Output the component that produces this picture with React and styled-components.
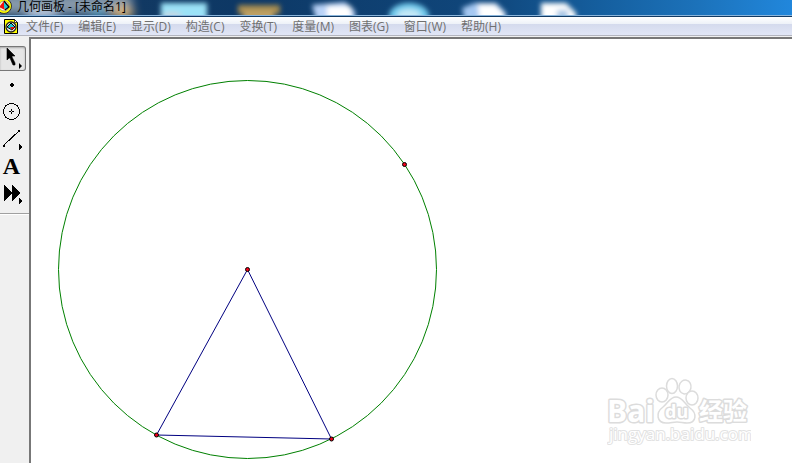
import React from 'react'
import styled, { createGlobalStyle } from 'styled-components'

const menus = [
  '文件(F)',
  '编辑(E)',
  '显示(D)',
  '构造(C)',
  '变换(T)',
  '度量(M)',
  '图表(G)',
  '窗口(W)',
  '帮助(H)',
]

const AppLogo = () => (
  <svg width='16' height='16' viewBox='0 0 16 16' aria-hidden='true'>
    <circle cx='4' cy='8' r='7.5' fill='#ffff00' stroke='#333' />
    <circle cx='4' cy='8' r='5' fill='#fffbe0' stroke='#b0a860' />
    <path d='M-1 9L4 3V9Z' fill='#f01010' />
    <path d='M4 3L9 9L5 12L4 9Z' fill='#18c8d8' />
    <path d='M4 3L9 9L5 12' fill='none' stroke='#000' strokeWidth='1.2' />
    <path d='M-1 9H4L5 12Z' fill='#f01010' />
  </svg>
)

const PageLogo = () => (
  <svg width='16' height='16' viewBox='0 0 16 16' aria-hidden='true'>
    <path d='M1.5 1.5H11.5L14.5 4.5V15.5H1.5Z' fill='#ffff00' stroke='#000' />
    <path d='M11.5 1.5V4.5H14.5Z' fill='#fff' stroke='#000' strokeWidth='0.7' />
    <circle cx='8' cy='9' r='5' fill='#e8e8e8' stroke='#222' strokeWidth='1.3' />
    <path d='M4 9L8 5L12 9L9 12Z' fill='#18c8d8' stroke='#000' />
    <path d='M7 9H12L9 12Z' fill='#e81010' />
  </svg>
)

const Desktop = () => (
  <Backdrop aria-hidden='true'>
    <defs>
      <filter id='soft' x='-30%' y='-80%' width='160%' height='260%'>
        <feGaussianBlur stdDeviation='2.5' />
      </filter>
      <filter id='glow' x='-30%' y='-80%' width='160%' height='260%'>
        <feGaussianBlur stdDeviation='5' />
      </filter>
    </defs>
    <g filter='url(#glow)'>
      <rect x='-10' y='-6' width='142' height='20' fill='#a3b0bd' opacity='0.8' />
      <ellipse cx='122' cy='12' rx='12' ry='6' fill='#e2b877' />
      <ellipse cx='98' cy='13' rx='9' ry='4' fill='#54a9c9' />
      <ellipse cx='42' cy='14' rx='18' ry='4' fill='#dbe7fa' />
    </g>
    <g filter='url(#soft)'>
      <rect x='161' y='3' width='46' height='24' fill='#9be2f7' />
      <ellipse cx='172' cy='15' rx='10' ry='3' fill='#c8d5df' />
      <rect x='238' y='5' width='42' height='9' fill='#a58a4e' />
      <rect x='243' y='10' width='31' height='16' fill='#bea064' />
      <path d='M312 5L345 2L355 11V26H318Z' fill='#b9d3f8' />
      <rect x='327' y='6' width='24' height='20' fill='#fff' />
      <ellipse cx='409' cy='16' rx='20' ry='13' fill='#72cbed' />
      <ellipse cx='409' cy='15' rx='12' ry='6' fill='#c3e8f6' />
      <path d='M462 8L475 3H496L506 13V26H466Z' fill='#a5c8f2' />
      <path d='M478 4H495L504 13V26H480Z' fill='#fff' />
      <path d='M541 3H566L576 13V26H541Z' fill='#fff' />
      <path d='M557 10H568V20H557Z' fill='#a9c6e5' />
    </g>
  </Backdrop>
)

const More = () => <path d='M19 17V23L22 20Z' />

const tools = [
  { name: '移动箭头工具', icon: <><path d='M7 2V14L9 12L10 12L13 19H15L15 17L12 11L12 10H15Z' stroke='#000' strokeWidth='0.6' /><More /></> },
  { name: '点工具', icon: <path d='M11 10H13V11H14V13H13V14H11V13H10V11H11Z' /> },
  {
    name: '圆工具',
    icon: <>
      <circle cx='11.5' cy='11.5' r='8' fill='none' stroke='#000' />
      <path d='M11.5 9V14M9 11.5H14' stroke='#000' />
      <rect x='11' y='11' width='1' height='1' fill='#f0f0f0' />
    </>,
  },
  {
    name: '线段直尺工具',
    icon: <>
      <path d='M3.5 18.5L19.5 3.5' stroke='#000' />
      <rect x='3' y='18' width='2' height='2' />
      <rect x='18' y='3' width='2' height='2' />
      <More />
    </>,
  },
  { name: '文字工具', letter: 'A' },
  { name: '自定义工具', icon: <><path d='M4 4L12 11V4L20 12L12 20V13L4 20Z' /><More /></> },
]

const Sketch = () => (
  <Drawing role='img' aria-label='圆与三角形'>
    <circle cx='216.5' cy='230.5' r='189' fill='none' stroke='#008000' />
    <path d='M216.5 230.5L125.5 396L300.5 400Z' fill='none' stroke='#000080' />
    {[[216.5, 230.5], [373.5, 125.5], [125.5, 396], [300.5, 400]].map(([x, y]) => (
      <circle key={x} cx={x} cy={y} r='2' fill='#f00018' stroke='#000' />
    ))}
  </Drawing>
)

const Watermark = () => (
  <Mark width='144' height='72' viewBox='0 0 144 72'>
    <MarkText x='0' y='45' $size={30} $bold>Bai</MarkText>
    <g fill='#fff' stroke='#dcdcdc' strokeWidth='1.5'>
      <ellipse cx='55' cy='18' rx='6' ry='7' />
      <ellipse cx='65' cy='9' rx='5.5' ry='7.5' />
      <ellipse cx='78' cy='10' rx='6' ry='7' transform='rotate(12 78 10)' />
      <ellipse cx='85' cy='21' rx='6' ry='7' />
      <path d='M69 20C63 20 61 26 56 30C48 36 50 46 59 46C64 46 66 45 70 45C74 45 76 46 80 46C90 46 90 36 83 31C77 26 75 20 69 20Z' />
    </g>
    <MarkText x='58' y='41' $size={18} $bold>du</MarkText>
    <MarkText x='92' y='43' $size={24} $bold>经验</MarkText>
    <MarkText x='2' y='63' $size={17}>jingyan.baidu.com</MarkText>
  </Mark>
)

const App = () => {
  return (
    <Window>
      <GlobalStyle />
      <TitleBar>
        <Desktop />
        <AppLogo />
        <Title>几何画板 - [未命名1]</Title>
      </TitleBar>
      <MenuBar>
        <PageLogo />
        <MenuList>
          {menus.map((menu) => <MenuButton key={menu} type='button'>{menu}</MenuButton>)}
        </MenuList>
      </MenuBar>
      <Workspace>
        <Toolbox>
          {tools.map((tool, i) => (
            <ToolButton key={tool.name} type='button' aria-label={tool.name} $active={i === 0}>
              {tool.letter
                ? <Letter>{tool.letter}</Letter>
                : <svg width='25' height='25' viewBox='0 0 25 25' shapeRendering={i === 0 ? 'auto' : 'crispEdges'}>{tool.icon}</svg>}
            </ToolButton>
          ))}
          <Divider />
        </Toolbox>
        <Page>
          <Sketch />
          <Watermark />
        </Page>
      </Workspace>
    </Window>
  )
}

export default App

const GlobalStyle = createGlobalStyle`
  * {
    box-sizing: border-box;
  }

  body {
    margin: 0;
    font-family: 'Open Sans', 'Noto Sans CJK SC', sans-serif;
    font-size: 12px;
  }
`

const Window = styled.div`
  display: flex;
  flex-direction: column;
  height: 100vh;
  overflow: hidden;
  background: #fff;
`

const TitleBar = styled.header`
  position: relative;
  display: flex;
  flex: none;
  align-items: flex-end;
  height: 17px;
  overflow: hidden;
  padding-bottom: 2px;
  border-bottom: 1px solid #123a63;
  background: linear-gradient(90deg, #173a5f 0%, #0d3865 30%, #10477c 62%, #155f9f 76%, #1c72ba 88%, #2187dc 100%);
  box-shadow: inset 0 -1px #8ab5dc;

  > svg {
    position: relative;
    flex: none;
  }
`

const Backdrop = styled.svg`
  && {
    position: absolute;
    top: 0;
    left: 0;
    width: 100%;
    height: 15px;
  }
`

const Title = styled.h1`
  position: relative;
  margin: 0;
  padding-left: 1px;
  font-size: 12px;
  font-weight: 400;
  line-height: 14px;
  white-space: nowrap;
  color: #000;
`

const MenuBar = styled.nav`
  display: flex;
  flex: none;
  align-items: flex-end;
  height: 19px;
  padding-left: 3px;
  border-bottom: 1px solid #b3b5bf;
  background: linear-gradient(#fff 0, #edf1f8 7px, #d4daed 7px, #e1e6f6 18px);

  > svg {
    flex: none;
    align-self: center;
  }
`

const MenuList = styled.div`
  display: flex;
  gap: 15px;
  padding-left: 7px;
`

const MenuButton = styled.button`
  padding: 0;
  border: 0;
  background: none;
  font: inherit;
  line-height: 16px;
  white-space: nowrap;
  color: #707070;
`

const Workspace = styled.div`
  display: flex;
  flex: 1;
  min-height: 0;
  border-top: 1px solid #f0f0f0;
`

const Toolbox = styled.aside`
  display: flex;
  flex: none;
  flex-direction: column;
  gap: 2px;
  width: 29px;
  padding-top: 9px;
  background: #f0f0f0;
`

const ToolButton = styled.button`
  display: flex;
  align-items: center;
  justify-content: center;
  width: 26px;
  height: 25px;
  padding: 0;
  border: 1px solid ${(props) => (props.$active ? '#777' : 'transparent')};
  border-left: 0;
  border-radius: 0 3px 3px 0;
  background: ${(props) => (props.$active ? '#e6e6e6' : 'none')};
  box-shadow: ${(props) => (props.$active ? 'inset 0 1px 2px #aaa' : 'none')};
  color: #000;

  svg {
    flex: none;
  }
`

const Letter = styled.span`
  padding: 0 2px 2px 0;
  font-family: 'Liberation Serif', serif;
  font-size: 24px;
  font-weight: 700;
  line-height: 24px;
`

const Divider = styled.hr`
  width: 100%;
  margin: 5px 0 0;
  border: 0;
  border-top: 1px solid #a0a0a0;
  border-bottom: 1px solid #fff;
`

const Page = styled.main`
  position: relative;
  flex: 1;
  min-width: 0;
  border-top: 2px solid #777;
  border-left: 2px solid #777;
  background: #fff;
`

const Drawing = styled.svg`
  display: block;
  width: 100%;
  height: 100%;
`

const Mark = styled.svg`
  position: absolute;
  right: 41px;
  bottom: 14px;
`

const MarkText = styled.text`
  fill: #fff;
  stroke: ${(props) => (props.$bold ? '#dcdcdc' : '#e2e2e2')};
  stroke-width: ${(props) => (props.$bold ? 3 : 2)}px;
  stroke-linejoin: round;
  paint-order: stroke;
  font-family: 'Open Sans', 'Noto Sans CJK SC', sans-serif;
  font-size: ${(props) => props.$size}px;
  font-weight: ${(props) => (props.$bold ? 700 : 400)};
`
